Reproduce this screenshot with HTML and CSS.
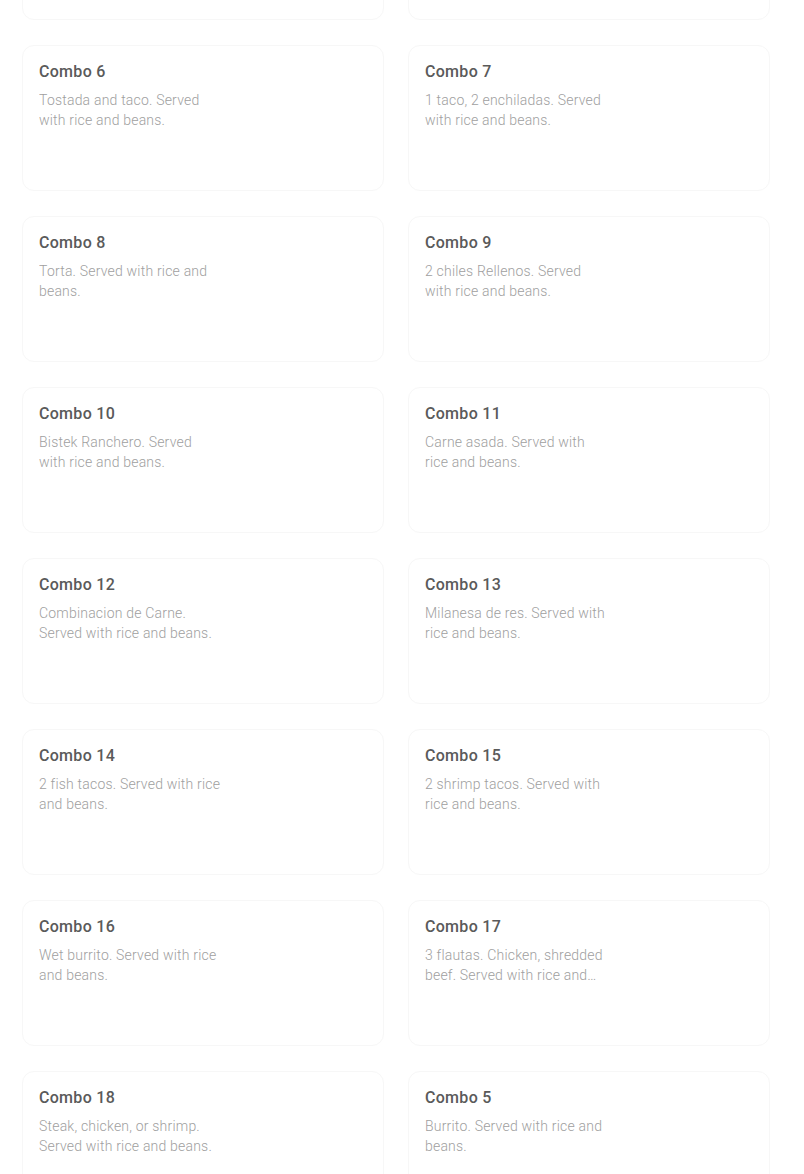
FILE: index.html
```html
<!DOCTYPE html>
<html lang="en">
<head>
    <meta charset="UTF-8">
    <meta name="viewport" content="width=device-width, initial-scale=1.0">
    <title>Combos</title>
    <link rel="stylesheet" href="styles.css">
</head>
<body>

    <div class="menu-grid">
        <div class="card card-cut"></div>
        <div class="card card-cut"></div>

        <div class="card">
            <h3>Combo 6</h3>
            <p class="desc">Tostada and taco. Served with rice and beans.</p>
        </div>
        <div class="card">
            <h3>Combo 7</h3>
            <p class="desc">1 taco, 2 enchiladas. Served with rice and beans.</p>
        </div>

        <div class="card">
            <h3>Combo 8</h3>
            <p class="desc">Torta. Served with rice and beans.</p>
        </div>
        <div class="card">
            <h3>Combo 9</h3>
            <p class="desc">2 chiles Rellenos. Served with rice and beans.</p>
        </div>

        <div class="card">
            <h3>Combo 10</h3>
            <p class="desc">Bistek Ranchero. Served with rice and beans.</p>
        </div>
        <div class="card">
            <h3>Combo 11</h3>
            <p class="desc">Carne asada. Served with rice and beans.</p>
        </div>

        <div class="card">
            <h3>Combo 12</h3>
            <p class="desc">Combinacion de Carne. Served with rice and beans.</p>
        </div>
        <div class="card">
            <h3>Combo 13</h3>
            <p class="desc">Milanesa de res. Served with rice and beans.</p>
        </div>

        <div class="card">
            <h3>Combo 14</h3>
            <p class="desc">2 fish tacos. Served with rice and beans.</p>
        </div>
        <div class="card">
            <h3>Combo 15</h3>
            <p class="desc">2 shrimp tacos. Served with rice and beans.</p>
        </div>

        <div class="card">
            <h3>Combo 16</h3>
            <p class="desc">Wet burrito. Served with rice and beans.</p>
        </div>
        <div class="card">
            <h3>Combo 17</h3>
            <p class="desc">3 flautas. Chicken, shredded beef. Served with rice and beans.</p>
        </div>

        <div class="card">
            <h3>Combo 18</h3>
            <p class="desc">Steak, chicken, or shrimp. Served with rice and beans.</p>
        </div>
        <div class="card">
            <h3>Combo 5</h3>
            <p class="desc">Burrito. Served with rice and beans.</p>
        </div>
    </div>

</body>
</html>
```

FILE: styles.css
```css
/* Basic Reset */
* {
    margin: 0;
    padding: 0;
    box-sizing: border-box;
}

body {
    font-family: 'Roboto', 'Liberation Sans', sans-serif;
    background-color: #fff;
    color: #545454;
    overflow: hidden;
}

.menu-grid {
    display: grid;
    grid-template-columns: 362px 362px;
    column-gap: 24px;
    row-gap: 25px;
    padding-left: 22px;
    margin-top: -126px;
}

.card {
    height: 146px;
    border: 1px solid #f7f7f7;
    border-radius: 12px;
    padding: 15px 16px;
    background-color: #fff;
}

.card h3 {
    font-size: 16px;
    line-height: 22px;
    font-weight: 500;
    letter-spacing: 0.3px;
    color: #5a5a5a;
}

.desc {
    margin-top: 7px;
    width: 182px;
    font-size: 14px;
    line-height: 20px;
    font-weight: 300;
    letter-spacing: 0.2px;
    color: #a0a0a0;
    display: -webkit-box;
    -webkit-line-clamp: 2;
    -webkit-box-orient: vertical;
    overflow: hidden;
}
```
